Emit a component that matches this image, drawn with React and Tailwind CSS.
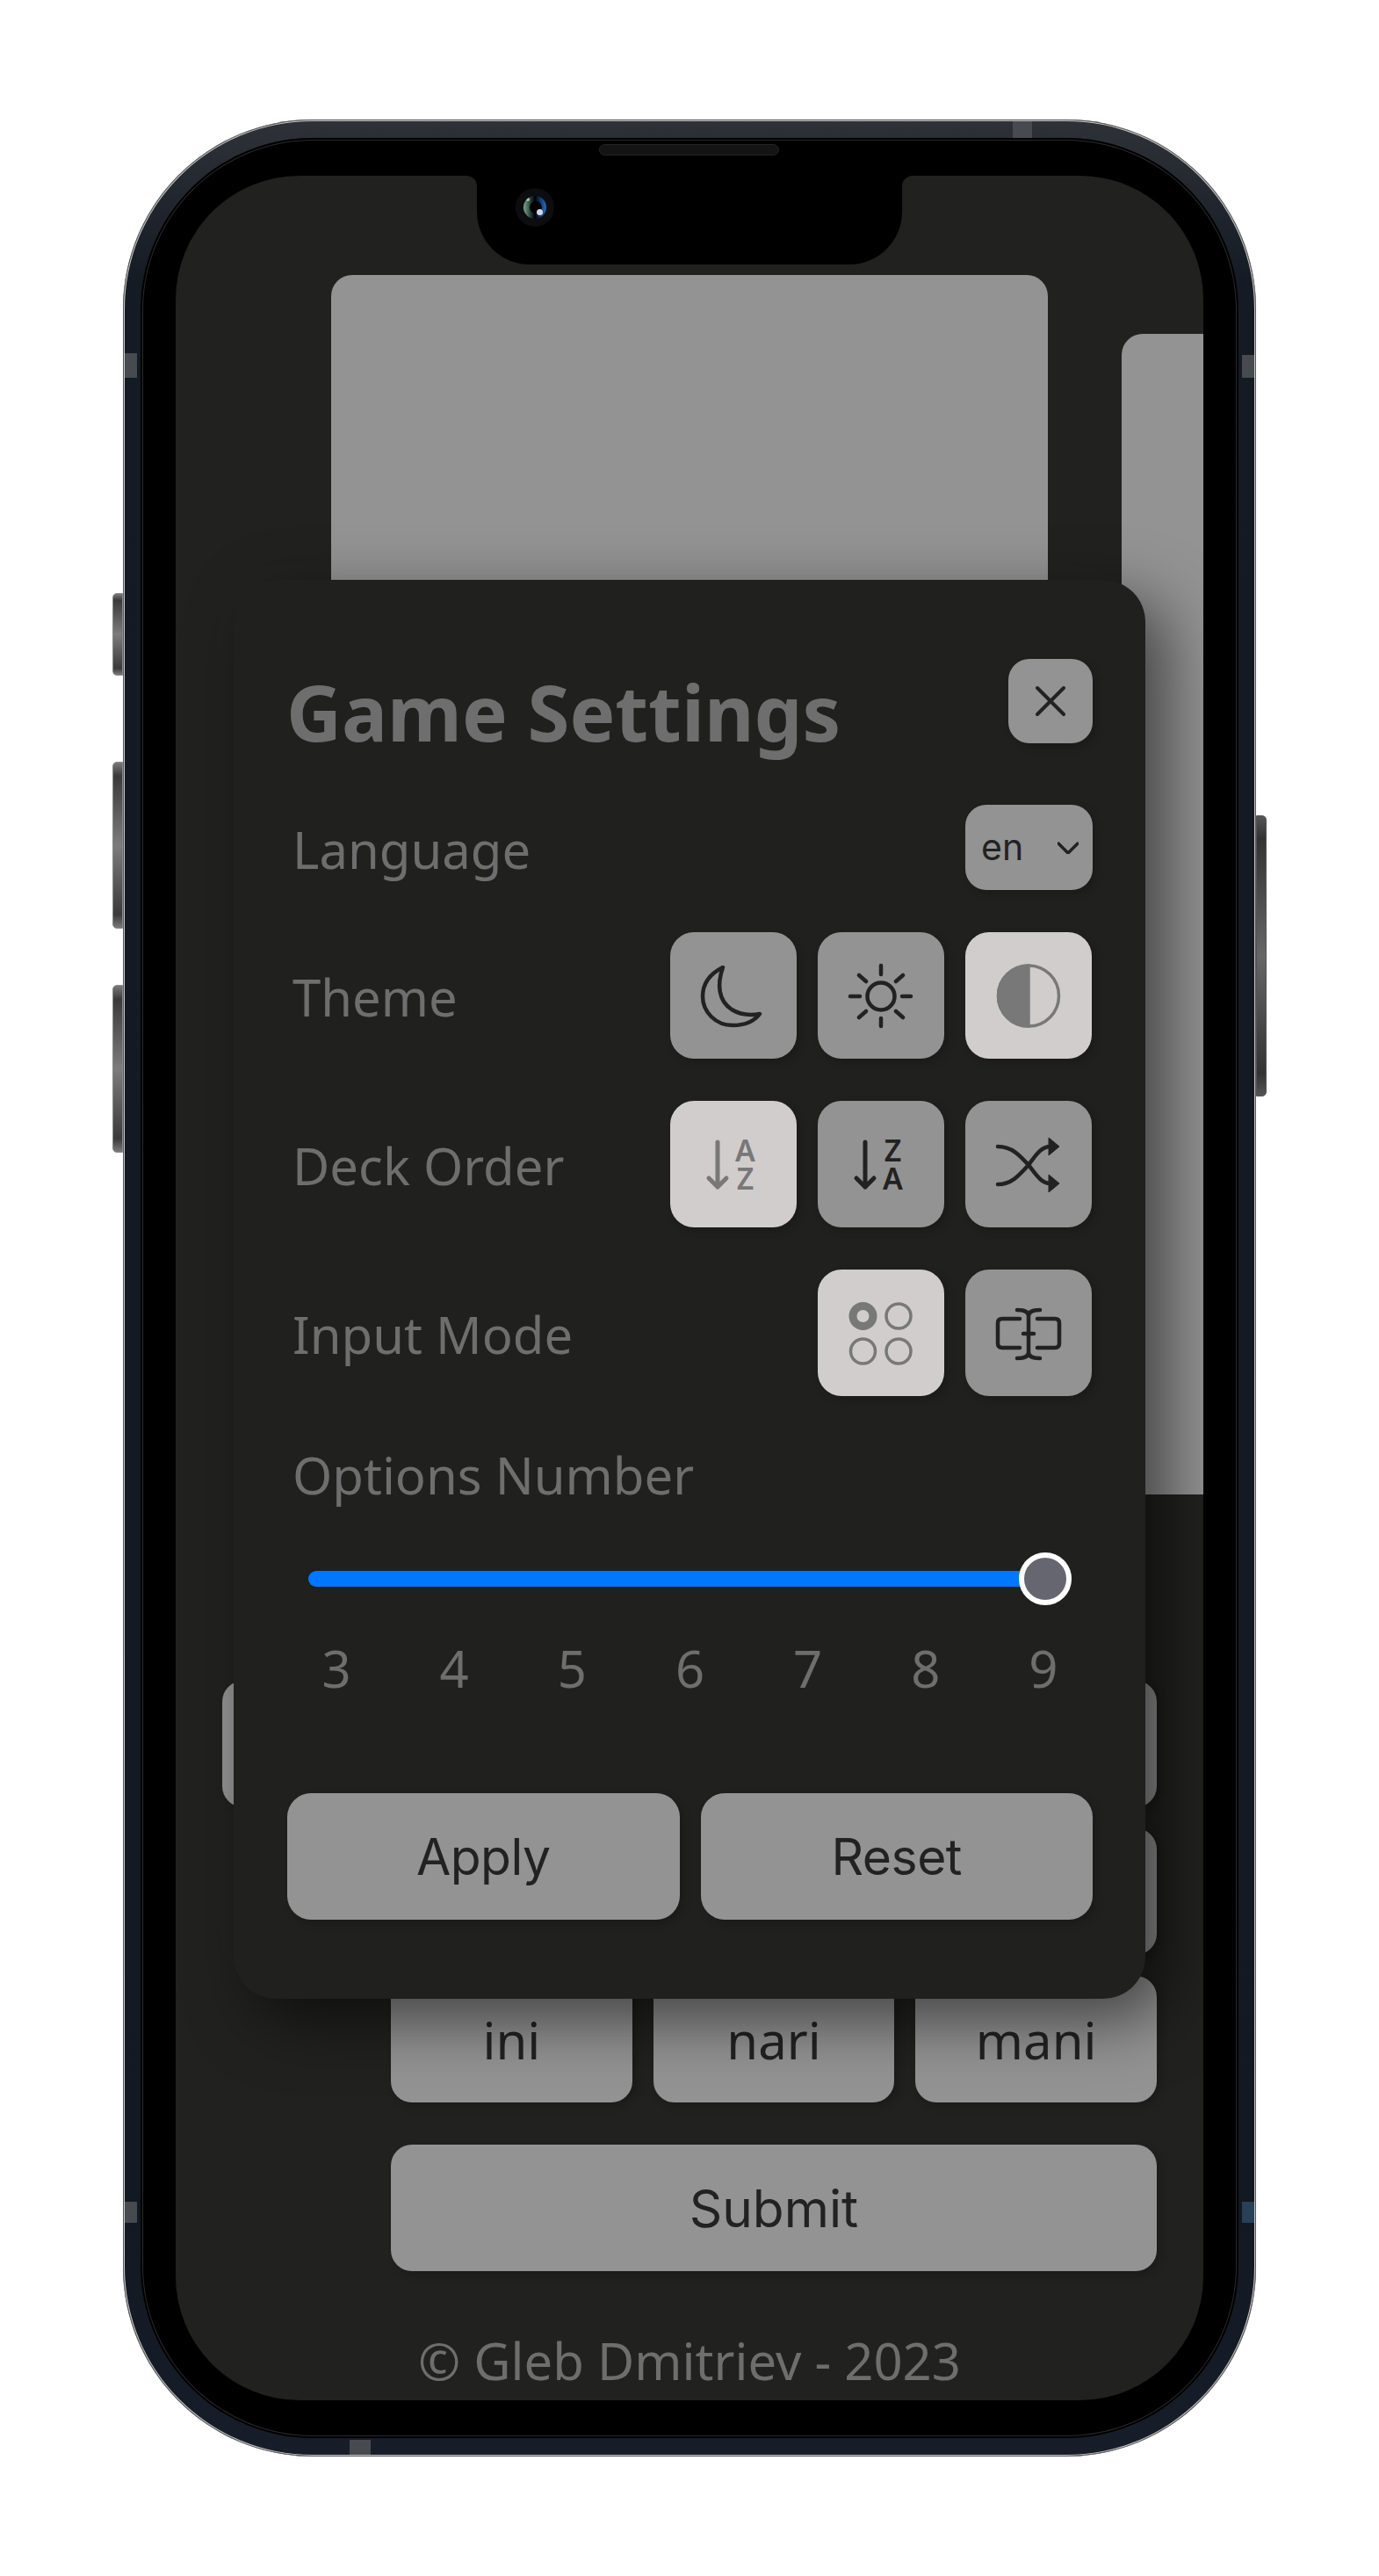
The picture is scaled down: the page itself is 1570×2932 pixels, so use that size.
const dark = '#222222';
const grey = '#787878';
const softShadow = 'shadow-[4px_4px_10px_rgba(0,0,0,0.2)]';

// icons are drawn in the coordinates of their 144px button
function MoonIcon() {
  return (
    <svg viewBox="0 0 144 144" className="w-[144px] h-[144px]" fill="none" stroke={dark} strokeWidth="4.5" strokeLinejoin="round">
      <path d="M60 40 C46 47 37 58 37 73 C37 91 52 106 71 106 C85 106 96 101 102 93 C90 95 78 93 70 88 C55 78 53 60 60 40Z" />
    </svg>
  );
}

function SunIcon() {
  return (
    <svg viewBox="0 0 144 144" className="w-[144px] h-[144px]" fill="none" stroke={dark} strokeWidth="4.5" strokeLinecap="round">
      <circle cx="72" cy="73" r="15.5" />
      <path d="M72 38V48M72 98V107M37 73H48M96 73H106M47 49L55 56M97 49L89 56M47 97L55 90M97 97L89 90" />
    </svg>
  );
}

function ContrastIcon() {
  return (
    <svg viewBox="0 0 144 144" className="w-[144px] h-[144px]">
      <circle cx="72" cy="72.5" r="34.5" fill="none" stroke={grey} strokeWidth="3.5" />
      <path d="M72 38 A34.5 34.5 0 0 0 72 107Z" fill={grey} stroke={grey} strokeWidth="3.5" />
    </svg>
  );
}

function SortIcon({ top, bottom, color }) {
  return (
    <svg viewBox="0 0 144 144" className="w-[144px] h-[144px]">
      <path d="M54 47V98M44 88L54 98L64 88" fill="none" stroke={color} strokeWidth="5" strokeLinecap="round" strokeLinejoin="round" />
      <text x="85.500" y="68.500" textAnchor="middle" fill={color} fontFamily="Noto Sans, sans-serif" fontWeight="600" fontSize="34">{top}</text>
      <text x="85.500" y="100.500" textAnchor="middle" fill={color} fontFamily="Noto Sans, sans-serif" fontWeight="600" fontSize="34">{bottom}</text>
    </svg>
  );
}

function ShuffleIcon() {
  return (
    <svg viewBox="0 0 144 144" className="w-[144px] h-[144px]">
      <g fill="none" stroke={dark} strokeWidth="4.500" strokeLinecap="round">
        <path d="M37 52 C53 52 62 62 72 73 C80 83 86 94 97 94" />
        <path d="M37 95 C53 95 62 84 72 73 C80 62 86 52 97 52" />
      </g>
      <path d="M95 42L107 52L95 62ZM95 84L107 94L95 104Z" fill={dark} stroke={dark} strokeWidth="1" strokeLinejoin="round" />
    </svg>
  );
}

function ChoiceIcon() {
  return (
    <svg viewBox="0 0 144 144" className="w-[144px] h-[144px]" fill="none" stroke={grey} strokeWidth="3.500">
      <circle cx="51.500" cy="53" r="11.500" strokeWidth="9" />
      <circle cx="92" cy="53" r="14" />
      <circle cx="51.500" cy="93" r="14" />
      <circle cx="92" cy="93" r="14" />
    </svg>
  );
}

function TextInputIcon() {
  return (
    <svg viewBox="0 0 144 144" className="w-[144px] h-[144px]" fill="none" stroke={dark} strokeWidth="4.500" strokeLinecap="round" strokeLinejoin="round">
      <path d="M62 56H42Q37 56 37 61V84Q37 89 42 89H62" />
      <path d="M82 56H102Q107 56 107 61V84Q107 89 102 89H82" />
      <path d="M59 46C66 46 72 47 72 53V94C72 100 66 101 59 101M85 46C78 46 72 47 72 53M72 94C72 100 78 101 85 101M66 73H78" />
    </svg>
  );
}

function IconButton({ active, children }) {
  return (
    <button className={`w-[144px] h-[144px] rounded-[27px] ${softShadow} ${active ? 'bg-[#d2cdcd]' : 'bg-[#939393]'}`}>
      {children}
    </button>
  );
}

function SettingRow({ label, className, children }) {
  return (
    <div className={`flex items-center justify-between ${className}`}>
      <span className="ml-[7px] mt-[4px] text-[58px] leading-[84px] text-[#6e6e6e]">{label}</span>
      <div className="flex gap-[24px]">{children}</div>
    </div>
  );
}

function SettingsModal() {
  return (
    <div className="absolute left-[66px] top-[460px] w-[1038px] h-[1615px] rounded-[48px] bg-[#20201f] px-[60px] pt-[90px] shadow-[24px_24px_72px_rgba(0,0,0,0.55),-18px_-18px_54px_rgba(255,255,255,0.015)]">
      <div className="flex justify-between items-center h-[96px]">
        <h2 className="mt-[23px] text-[87px] leading-[96px] font-bold text-[#6e6e6e]">Game Settings</h2>
        <button className={`w-[96px] h-[96px] rounded-[24px] bg-[#939393] ${softShadow}`}>
          <svg viewBox="0 0 96 96" className="w-[96px] h-[96px]" fill="none" stroke={dark} strokeWidth="4" strokeLinecap="round">
            <path d="M33 33L63 63M63 33L33 63" />
          </svg>
        </button>
      </div>

      <SettingRow label="Language" className="mt-[70px] h-[97px]">
        <div className={`flex items-center justify-between w-[145px] h-[97px] rounded-[24px] bg-[#939393] pl-[18px] pr-[16px] ${softShadow} font-['Inter'] text-[41px] text-[#222222]`}>
          <span>en</span>
          <svg viewBox="0 0 24 14" className="w-[24px] h-[14px]" fill="none" stroke={dark} strokeWidth="3.500" strokeLinecap="round" strokeLinejoin="round">
            <path d="M1 2L12 13L23 2" />
          </svg>
        </div>
      </SettingRow>

      <SettingRow label="Theme" className="mt-[48px] mr-[1px]">
        <IconButton><MoonIcon /></IconButton>
        <IconButton><SunIcon /></IconButton>
        <IconButton active><ContrastIcon /></IconButton>
      </SettingRow>

      <SettingRow label="Deck Order" className="mt-[48px] mr-[1px]">
        <IconButton active><SortIcon top="A" bottom="Z" color={grey} /></IconButton>
        <IconButton><SortIcon top="Z" bottom="A" color={dark} /></IconButton>
        <IconButton><ShuffleIcon /></IconButton>
      </SettingRow>

      <SettingRow label="Input Mode" className="mt-[48px] mr-[1px]">
        <IconButton active><ChoiceIcon /></IconButton>
        <IconButton><TextInputIcon /></IconButton>
      </SettingRow>

      <div className="mt-[48px] ml-[7px] text-[58px] leading-[84px] text-[#6e6e6e]">Options Number</div>

      <div className="relative flex items-center mt-[46px] ml-[25px] mr-[24px] h-[60px]">
        <div className="w-full h-[18px] rounded-full bg-[#0077ff]" />
        <div className="absolute right-0 top-0 w-[60px] h-[60px] rounded-full border-[6px] border-white bg-[#666670]" />
      </div>

      <div className="flex justify-between mt-[30px] ml-[27px] mr-[26px]">
        {[3, 4, 5, 6, 7, 8, 9].map((n) => (
          <span key={n} className="w-[60px] text-center text-[58px] leading-[84px] text-[#6e6e6e]">{n}</span>
        ))}
      </div>

      <div className="grid grid-cols-2 gap-[24px] mt-[100px] ml-[1px] font-['Inter'] text-[57px] tracking-[-0.5px] text-[#222222]">
        <button className={`h-[144px] pt-[2px] rounded-[27px] bg-[#939393] ${softShadow}`}>Apply</button>
        <button className={`h-[144px] pt-[2px] rounded-[27px] bg-[#939393] ${softShadow}`}>Reset</button>
      </div>
    </div>
  );
}

function GameScreen() {
  const answer = `h-[144px] rounded-[24px] bg-[#939393] text-[#222222] ${softShadow}`;
  return (
    <div className="relative w-[1170px] h-[2532px] rounded-[141px] overflow-hidden bg-[#21211f] font-['Noto_Sans',sans-serif]">
      {/* deck */}
      <div className="flex pt-[113px] pl-[177px]">
        <div className="shrink-0 w-[816px] h-[1455px] rounded-[24px] bg-[#939393]" />
        <div className="shrink-0 ml-[84px] mt-[67px] w-[744px] h-[1321px] rounded-[24px] bg-[#939393]" />
      </div>

      {/* answers */}
      <div className="grid grid-cols-[168px_1fr_1fr_1fr] gap-[24px] mt-[145px] px-[53px] text-[58px]">
        <button className={answer} />
        <button className={answer} />
        <button className={answer} />
        <button className={answer} />
        <button className={`col-start-2 ${answer}`} />
        <button className={answer} />
        <button className={answer} />
        <button className={`col-start-2 ${answer}`}>ini</button>
        <button className={answer}>nari</button>
        <button className={answer}>mani</button>
        <button className={`col-start-2 col-span-3 mt-[24px] pt-[2px] font-['Inter'] text-[58.5px] ${answer}`}>Submit</button>
      </div>

      <footer className="mt-[60px] text-center text-[58px] leading-[84px] text-[#6e6e6e]">© Gleb Dmitriev - 2023</footer>

      {/* notch */}
      <div className="absolute left-[343px] top-0 w-[484px] h-[101px] rounded-b-[60px] bg-black" />
      <div className="absolute left-[331px] top-0 w-[12px] h-[12px] bg-black">
        <div className="w-full h-full rounded-tr-[12px] bg-[#21211f]" />
      </div>
      <div className="absolute left-[827px] top-0 w-[12px] h-[12px] bg-black">
        <div className="w-full h-full rounded-tl-[12px] bg-[#21211f]" />
      </div>

      <SettingsModal />
    </div>
  );
}

function PhoneFrame({ children }) {
  const sideButton = 'absolute w-[12px] border border-[#8a8a8a] bg-[linear-gradient(to_bottom,#7a7a7a,#3a3a3a_8%,#7c7c7c_50%,#3a3a3a_92%,#7a7a7a)]';
  const antenna = 'absolute bg-[#474a4e]';
  return (
    <div className="relative w-[1290px] h-[2660px]">
      <div className={`${sideButton} left-[-12px] top-[539px] h-[94px] rounded-l-[5px]`} />
      <div className={`${sideButton} left-[-12px] top-[731px] h-[190px] rounded-l-[5px]`} />
      <div className={`${sideButton} left-[-12px] top-[985px] h-[191px] rounded-l-[5px]`} />
      <div className="absolute right-[-12px] top-[792px] w-[12px] h-[320px] rounded-r-[5px] border border-[#555555] bg-[linear-gradient(to_bottom,#555555,#333333_8%,#666666_50%,#333333_92%,#555555)]" />

      <div className="w-full h-full rounded-[216px] px-[20px] py-[21px] bg-[linear-gradient(to_bottom,#2e3238,#151b24_7%,#131922_90%,#171d29)] shadow-[inset_0_0_0_1px_#555555,inset_0_0_0_2px_#c8c8c8]">
        <div className="w-full h-full rounded-[196px] px-[40px] py-[43px] bg-black shadow-[inset_0_0_0_2px_#000000,inset_0_0_0_3px_#2a2a2a]">
          {children}
        </div>
      </div>

      {/* antenna bands */}
      <div className={`${antenna} left-[1013px] top-[2px] w-[22px] h-[19px]`} />
      <div className={`${antenna} left-[2px] top-[266px] w-[14px] h-[28px]`} />
      <div className={`${antenna} right-[2px] top-[268px] w-[14px] h-[26px]`} />
      <div className={`${antenna} left-[2px] top-[2370px] w-[14px] h-[24px]`} />
      <div className="absolute right-[2px] top-[2370px] w-[14px] h-[24px] bg-[#2a3f58]" />
      <div className={`${antenna} left-[258px] bottom-[2px] w-[24px] h-[17px]`} />

      {/* speaker */}
      <div className="absolute left-[542px] top-[28px] w-[205px] h-[13px] rounded-full border border-[#242424] bg-[#141414]" />

      {/* camera */}
      <div className="absolute left-[447px] top-[78px] flex items-center justify-center w-[44px] h-[44px] rounded-full bg-[#0d0d0f]">
        <div className="relative w-[26px] h-[26px] rounded-full overflow-hidden bg-[linear-gradient(to_right,#7fa891,#27433a_30%,#000000_50%,#0d3f78_75%,#2a6eb8)]">
          <div className="absolute left-[7px] top-[6px] w-[14px] h-[14px] rounded-full bg-black" />
          <div className="absolute left-[15px] top-[15px] w-[7px] h-[7px] rounded-full bg-[#d8d4e4]" />
          <div className="absolute left-[3px] top-[2px] w-[4px] h-[4px] rounded-full bg-[#a9c4b5]" />
        </div>
      </div>
    </div>
  );
}

export default function App() {
  return (
    <div className="flex items-center justify-center w-[1570px] h-[2932px] bg-white">
      <PhoneFrame>
        <GameScreen />
      </PhoneFrame>
    </div>
  );
}
